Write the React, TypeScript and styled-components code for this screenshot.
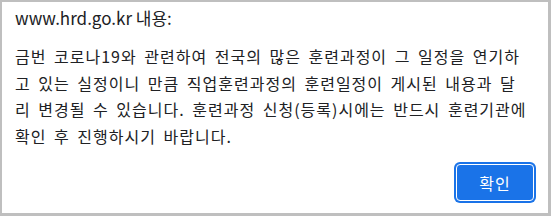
import * as React from 'react';
import styled, {createGlobalStyle} from 'styled-components';

const GlobalStyle = createGlobalStyle`
  html, body {
    margin: 0;
    padding: 0;
    background: #ffffff;
  }
  body {
    font-family: "Noto Sans CJK KR", "Noto Sans", sans-serif;
  }
`;

const Dialog = styled.div`
  box-sizing: border-box;
  width: 551px;
  height: 216px;
  background: #ffffff;
  border-style: solid;
  border-color: #bfbfbf;
  border-width: 2px 3px 3px 2px;
  display: flex;
  flex-direction: column;
  padding: 4px 12px 10px 13px;
  color: #202124;
`;

const Title = styled.h1`
  margin: 0;
  font-size: 17px;
  font-weight: 400;
  line-height: 24px;
`;

const Message = styled.p`
  margin: 13px 0 0;
  width: 512px;
  font-size: 16px;
  line-height: 26.6px;
  letter-spacing: 1px;
  word-spacing: 3px;
  word-break: normal;
  line-break: anywhere;
`;

const Footer = styled.div`
  margin-top: auto;
  display: flex;
  justify-content: flex-end;
`;

const OkButton = styled.button`
  box-sizing: border-box;
  width: 78px;
  height: 37px;
  margin: 2px;
  border: 1px solid #ffffff;
  border-radius: 4px;
  box-shadow: 0 0 0 2px #1a73e8;
  background: #1a73e8;
  color: #ffffff;
  font-family: "Noto Sans CJK KR", sans-serif;
  font-size: 16px;
  letter-spacing: 1px;
  padding: 0;
  cursor: pointer;
`;

const App: React.FunctionComponent = () => (
  <React.Fragment>
    <GlobalStyle />
    <Dialog>
      <Title>www.hrd.go.kr 내용:</Title>
      <Message>
        금번 코로나19와 관련하여 전국의 많은 훈련과정이 그 일정을 연기하고 있는 실정이니 만큼
        직업훈련과정의 훈련일정이 게시된 내용과 달리 변경될 수 있습니다. 훈련과정 신청(등록)시에는
        반드시 훈련기관에 확인 후 진행하시기 바랍니다.
      </Message>
      <Footer>
        <OkButton>확인</OkButton>
      </Footer>
    </Dialog>
  </React.Fragment>
);

export default App;
